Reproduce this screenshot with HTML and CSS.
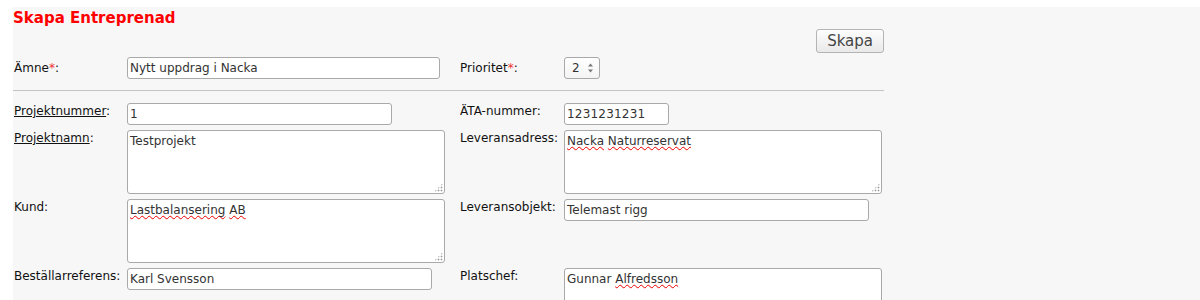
FILE: index.html
```html
<!doctype html>
<html lang="sv">
 <head>
  <meta charset="utf-8">
  <title>Skapa Entreprenad</title>
  <link rel="stylesheet" href="styles.css">
 </head>
 <body>
 <div id="panel">
	<h1 class="title">Skapa Entreprenad</h1>
	<form class="entry" name="newEntry">
		<div class="actions">
			<button type="button" class="btn">Skapa</button>
		</div>

		<div class="grid head-row">
			<label class="lbl">Ämne<span class="req">*</span>:</label>
			<div class="field size-lg">Nytt uppdrag i Nacka</div>
			<label class="lbl">Prioritet<span class="req">*</span>:</label>
			<div class="field spinner">
				<span>2</span>
				<svg width="7" height="12" viewBox="0 0 7 12"><path d="M1 4.5 L3.5 1.5 L6 4.5 Z" fill="#777"/><path d="M1 7.5 L3.5 10.5 L6 7.5 Z" fill="#777"/></svg>
			</div>
		</div>

		<hr class="sep">

		<div class="grid">
			<label class="lbl"><span class="linked">Projektnummer</span>:</label>
			<div class="field size-sm">1</div>
			<label class="lbl">ÄTA-nummer:</label>
			<div class="field size-xs">1231231231</div>

			<label class="lbl"><span class="linked">Projektnamn</span>:</label>
			<div class="field area">Testprojekt</div>
			<label class="lbl">Leveransadress:</label>
			<div class="field area"><span class="typo">Nacka</span> <span class="typo">Naturreservat</span></div>

			<label class="lbl">Kund:</label>
			<div class="field area"><span class="typo">Lastbalansering</span> <span class="typo">AB</span></div>
			<label class="lbl">Leveransobjekt:</label>
			<div class="field size-md">Telemast rigg</div>

			<label class="lbl">Beställarreferens:</label>
			<div class="field size-md">Karl Svensson</div>
			<label class="lbl">Platschef:</label>
			<div class="field area">Gunnar <span class="typo">Alfredsson</span></div>
		</div>
	</form>
 </div>
 </body>
</html>
```

FILE: styles.css
```css
body {
	margin: 0;
	font-family: "DejaVu Sans", Verdana, sans-serif;
	font-size: 12px;
	color: #111;
	background: #fff;
}

#panel {
	margin: 7px 0 0 13px;
	min-height: 293px;
	background-color: #f7f7f7;
}

.title {
	margin: 0;
	padding-top: 2px;
	font-size: 15px;
	line-height: 18px;
	font-weight: bold;
	color: #f00;
}

.entry {
	width: 871px;
}

.actions {
	margin-top: 2px;
	text-align: right;
}

.btn {
	height: 24px;
	padding: 0 10px;
	font-family: "DejaVu Sans", Verdana, sans-serif;
	font-size: 15px;
	color: #444;
	border: 1px solid #b4b4b4;
	border-radius: 3px;
	background: linear-gradient(#fdfdfd, #e9e9e9);
}

.grid {
	display: grid;
	grid-template-columns: 114px 332px 105px 320px;
	row-gap: 5px;
	align-items: start;
}

.head-row {
	margin-top: 4px;
	align-items: center;
}

.lbl {
	padding-left: 1px;
	line-height: 14px;
	padding-top: 1px;
}

.head-row .lbl {
	padding-top: 0;
}

.req {
	color: #e33;
}

.linked {
	text-decoration: underline;
}

.sep {
	margin: 11px 0 12px 0;
	height: 0;
	border: 0;
	border-top: 1px solid #c4c4c4;
}

.field {
	position: relative;
	box-sizing: border-box;
	height: 22px;
	padding: 2px 2px;
	line-height: 16px;
	color: #333;
	background: #fff;
	border: 1px solid #a9a9a9;
	border-radius: 3px;
	white-space: nowrap;
}

.size-lg { width: 313px; }
.size-md { width: 305px; }
.size-sm { width: 265px; }
.size-xs { width: 105px; letter-spacing: 0.2px; }

.area {
	width: 318px;
	height: 64px;
	padding-top: 2px;
	line-height: 16px;
}

.area::after {
	content: "";
	position: absolute;
	right: 1px;
	bottom: 1px;
	width: 9px;
	height: 9px;
	background-image: radial-gradient(circle, #9a9a9a 0.8px, transparent 1.1px);
	background-size: 3px 3px;
	clip-path: polygon(100% 0, 100% 100%, 0 100%);
}

.typo {
	text-decoration: underline wavy #e00;
	text-decoration-skip-ink: none;
	text-underline-offset: 1px;
	text-decoration-thickness: 1px;
}

.spinner {
	width: 36px;
	display: flex;
	align-items: center;
	justify-content: space-between;
	padding: 0 5px 0 7px;
	background: linear-gradient(#fff, #f4f4f4);
}
```
